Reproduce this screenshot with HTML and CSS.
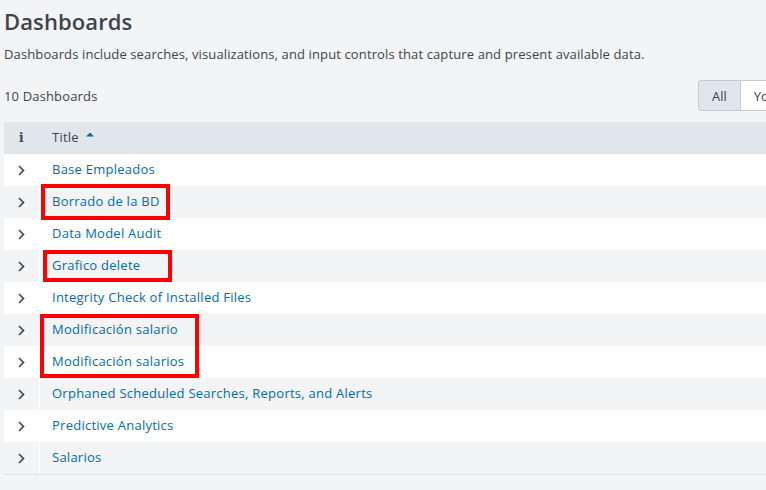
FILE: index.html
```html
<!DOCTYPE html>
<html>
<head>
<meta charset="utf-8">
<link rel="stylesheet" href="styles.css">
</head>
<body>
<div class="page">
  <h1 class="title">Dashboards</h1>
  <p class="desc">Dashboards include searches, visualizations, and input controls that capture and present available data.</p>
  <div class="toolbar">
    <span class="count">10 Dashboards</span>
    <div class="btn-group">
      <button class="btn active">All</button>
      <button class="btn">Yours</button>
      <button class="btn">This App's</button>
    </div>
  </div>
  <div class="table">
    <div class="row head">
      <div class="cell-exp"><span class="info">i</span></div>
      <div class="cell-title">Title <svg class="sort" width="8" height="5" viewBox="0 0 8 5"><path d="M0 4.5 L4 0.5 L8 4.5 Z" fill="#006eaa"/></svg></div>
    </div>
    <div class="row odd"><div class="cell-exp"><svg class="chev" width="7" height="11" viewBox="0 0 7 11"><path d="M1 1 L5.5 5.5 L1 10" fill="none" stroke="#3c444d" stroke-width="1.6"/></svg></div><div class="cell-title"><a>Base Empleados</a></div></div>
    <div class="row even"><div class="cell-exp"><svg class="chev" width="7" height="11" viewBox="0 0 7 11"><path d="M1 1 L5.5 5.5 L1 10" fill="none" stroke="#3c444d" stroke-width="1.6"/></svg></div><div class="cell-title"><a>Borrado de la BD</a></div></div>
    <div class="row odd"><div class="cell-exp"><svg class="chev" width="7" height="11" viewBox="0 0 7 11"><path d="M1 1 L5.5 5.5 L1 10" fill="none" stroke="#3c444d" stroke-width="1.6"/></svg></div><div class="cell-title"><a>Data Model Audit</a></div></div>
    <div class="row even"><div class="cell-exp"><svg class="chev" width="7" height="11" viewBox="0 0 7 11"><path d="M1 1 L5.5 5.5 L1 10" fill="none" stroke="#3c444d" stroke-width="1.6"/></svg></div><div class="cell-title"><a>Grafico delete</a></div></div>
    <div class="row odd"><div class="cell-exp"><svg class="chev" width="7" height="11" viewBox="0 0 7 11"><path d="M1 1 L5.5 5.5 L1 10" fill="none" stroke="#3c444d" stroke-width="1.6"/></svg></div><div class="cell-title"><a>Integrity Check of Installed Files</a></div></div>
    <div class="row even"><div class="cell-exp"><svg class="chev" width="7" height="11" viewBox="0 0 7 11"><path d="M1 1 L5.5 5.5 L1 10" fill="none" stroke="#3c444d" stroke-width="1.6"/></svg></div><div class="cell-title"><a>Modificación salario</a></div></div>
    <div class="row odd"><div class="cell-exp"><svg class="chev" width="7" height="11" viewBox="0 0 7 11"><path d="M1 1 L5.5 5.5 L1 10" fill="none" stroke="#3c444d" stroke-width="1.6"/></svg></div><div class="cell-title"><a>Modificación salarios</a></div></div>
    <div class="row even"><div class="cell-exp"><svg class="chev" width="7" height="11" viewBox="0 0 7 11"><path d="M1 1 L5.5 5.5 L1 10" fill="none" stroke="#3c444d" stroke-width="1.6"/></svg></div><div class="cell-title"><a>Orphaned Scheduled Searches, Reports, and Alerts</a></div></div>
    <div class="row odd"><div class="cell-exp"><svg class="chev" width="7" height="11" viewBox="0 0 7 11"><path d="M1 1 L5.5 5.5 L1 10" fill="none" stroke="#3c444d" stroke-width="1.6"/></svg></div><div class="cell-title"><a>Predictive Analytics</a></div></div>
    <div class="row even last"><div class="cell-exp"><svg class="chev" width="7" height="11" viewBox="0 0 7 11"><path d="M1 1 L5.5 5.5 L1 10" fill="none" stroke="#3c444d" stroke-width="1.6"/></svg></div><div class="cell-title"><a>Salarios</a></div></div>
  </div>
  <div class="mark m1"></div>
  <div class="mark m2"></div>
  <div class="mark m3"></div>
</div>
</body>
</html>
```
FILE: styles.css
```css
html, body {
  margin: 0;
  padding: 0;
  background: #f2f4f5;
  overflow: hidden;
}
body {
  width: 766px;
  height: 490px;
  font-family: "Open Sans", "DejaVu Sans", sans-serif;
  color: #3c444d;
}
.page {
  position: relative;
  width: 900px;
  padding: 0 0 0 4px;
}
.title {
  margin: 0;
  padding-top: 6px;
  height: 31px;
  font-size: 22px;
  font-weight: 600;
  line-height: 30px;
  color: #3c444d;
  letter-spacing: 0.1px;
}
.desc {
  margin: 0;
  margin-top: 8px;
  font-size: 13px;
  line-height: 18px;
  color: #3c444d;
  letter-spacing: 0.12px;
}
.toolbar {
  display: flex;
  align-items: center;
  margin-top: 17px;
  height: 31px;
}
.count {
  font-size: 13px;
  width: 694px;
  letter-spacing: 0.15px;
}
.btn-group {
  display: flex;
  height: 31px;
}
.btn {
  font-family: inherit;
  font-size: 13px;
  color: #3c444d;
  background: #fff;
  border: 1px solid #c3cbd4;
  border-left: none;
  padding: 0 13px;
  height: 31px;
}
.btn.active {
  background: #e1e6eb;
  border-left: 1px solid #c3cbd4;
  border-radius: 3px 0 0 3px;
}
.table {
  margin-top: 11px;
  width: 820px;
  border-bottom: 1px solid #dfe3e8;
}
.row {
  display: flex;
  height: 32px;
  align-items: stretch;
  font-size: 13px;
  letter-spacing: 0.25px;
}
.row.head {
  background: #e1e6eb;
}
.row.odd {
  background: #fff;
}
.row.even {
  background: #f2f4f5;
}
.cell-exp {
  width: 35px;
  display: flex;
  align-items: center;
  justify-content: center;
  border-right: 1px solid transparent;
}
.row.even .cell-exp {
  border-right-color: #fff;
}
.cell-title {
  padding-left: 12px;
  padding-bottom: 2px;
  display: flex;
  align-items: center;
}
.head .cell-title {
  color: #3c444d;
}
.sort {
  margin-left: 7px;
  margin-top: -6px;
}
.info {
  font-family: "DejaVu Serif", serif;
  font-weight: bold;
  font-size: 12px;
  color: #3c444d;
}
.chev {
  display: block;
}
.cell-title a {
  color: #006eaa;
  text-decoration: none;
}
.mark {
  position: absolute;
  border: 4px solid #ff0000;
  box-sizing: border-box;
}
.m1 { left: 41px; top: 184px; width: 129px; height: 36px; }
.m2 { left: 43px; top: 250px; width: 129px; height: 32px; }
.m3 { left: 40px; top: 314px; width: 159px; height: 64px; }
```
